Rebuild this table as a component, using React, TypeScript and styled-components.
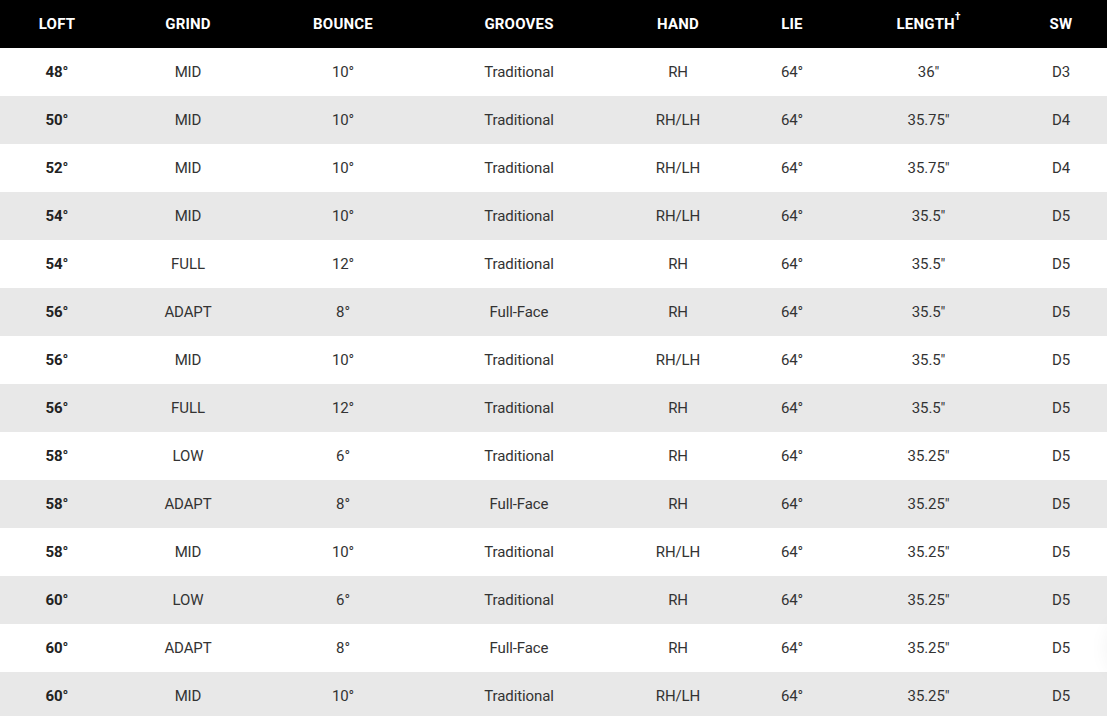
import React from "react";
import styled, { createGlobalStyle } from "styled-components";

const Global = createGlobalStyle`
  html, body { margin: 0; padding: 0; background: #fff; overflow: hidden; }
  body { font-family: Roboto, "Liberation Sans", Arial, sans-serif; }
`;

const Page = styled.div`
  width: 1107px;
  height: 716px;
  overflow: hidden;
  position: relative;
`;

const Table = styled.table`
  width: 1107px;
  border-collapse: collapse;
  table-layout: fixed;
`;

const HeadRow = styled.tr`
  background: #000;
  height: 48px;
`;

const Th = styled.th`
  color: #fff;
  font-weight: 700;
  font-size: 15px;
  letter-spacing: 0.2px;
  text-align: center;
  padding: 0;
  vertical-align: middle;
`;

const Dagger = styled.sup`
  font-size: 10px;
  vertical-align: top;
  position: relative;
  top: -4px;
`;

const Row = styled.tr<{ $alt: boolean }>`
  height: 48px;
  background: ${(p) => (p.$alt ? "#e8e8e8" : "#ffffff")};
`;

const Td = styled.td<{ $bold?: boolean }>`
  color: ${(p) => (p.$bold ? "#222" : "#333")};
  font-size: 15px;
  font-weight: ${(p) => (p.$bold ? 700 : 400)};
  letter-spacing: -0.1px;
  text-align: center;
  padding: 0;
  vertical-align: middle;
`;

const Glow = styled.div`
  position: absolute;
  left: 1109px;
  top: 618px;
  width: 60px;
  height: 60px;
  border-radius: 50%;
  box-shadow: 0 0 22px rgba(0, 0, 0, 0.07);
  pointer-events: none;
`;

const widths = [114, 148, 162, 190, 128, 100, 173, 92];

const rows: string[][] = [
  ["48°", "MID", "10°", "Traditional", "RH", "64°", '36"', "D3"],
  ["50°", "MID", "10°", "Traditional", "RH/LH", "64°", '35.75"', "D4"],
  ["52°", "MID", "10°", "Traditional", "RH/LH", "64°", '35.75"', "D4"],
  ["54°", "MID", "10°", "Traditional", "RH/LH", "64°", '35.5"', "D5"],
  ["54°", "FULL", "12°", "Traditional", "RH", "64°", '35.5"', "D5"],
  ["56°", "ADAPT", "8°", "Full-Face", "RH", "64°", '35.5"', "D5"],
  ["56°", "MID", "10°", "Traditional", "RH/LH", "64°", '35.5"', "D5"],
  ["56°", "FULL", "12°", "Traditional", "RH", "64°", '35.5"', "D5"],
  ["58°", "LOW", "6°", "Traditional", "RH", "64°", '35.25"', "D5"],
  ["58°", "ADAPT", "8°", "Full-Face", "RH", "64°", '35.25"', "D5"],
  ["58°", "MID", "10°", "Traditional", "RH/LH", "64°", '35.25"', "D5"],
  ["60°", "LOW", "6°", "Traditional", "RH", "64°", '35.25"', "D5"],
  ["60°", "ADAPT", "8°", "Full-Face", "RH", "64°", '35.25"', "D5"],
  ["60°", "MID", "10°", "Traditional", "RH/LH", "64°", '35.25"', "D5"],
];

export default function App() {
  return (
    <Page>
      <Global />
      <Table>
        <colgroup>
          {widths.map((w, i) => (
            <col key={i} style={{ width: w }} />
          ))}
        </colgroup>
        <thead>
          <HeadRow>
            <Th>LOFT</Th>
            <Th>GRIND</Th>
            <Th>BOUNCE</Th>
            <Th>GROOVES</Th>
            <Th>HAND</Th>
            <Th>LIE</Th>
            <Th>
              LENGTH<Dagger>†</Dagger>
            </Th>
            <Th>SW</Th>
          </HeadRow>
        </thead>
        <tbody>
          {rows.map((r, i) => (
            <Row key={i} $alt={i % 2 === 1}>
              {r.map((c, j) => (
                <Td key={j} $bold={j === 0}>
                  {c}
                </Td>
              ))}
            </Row>
          ))}
        </tbody>
      </Table>
      <Glow />
    </Page>
  );
}
